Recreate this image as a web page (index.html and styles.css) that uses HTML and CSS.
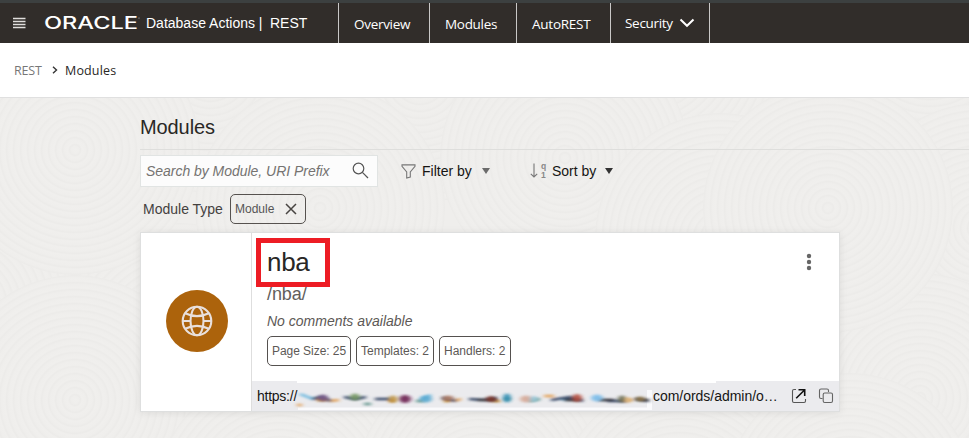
FILE: index.html
```html
<!DOCTYPE html>
<html lang="en">
<head>
<meta charset="utf-8">
<title>REST Modules</title>
<link rel="stylesheet" href="styles.css">
</head>
<body>
<header class="topbar">
  <div class="brand">
    <svg class="menu" width="13" height="12" viewBox="0 0 13 12"><path d="M0 1.5H12.5M0 4.5H12.5M0 7.5H12.5M0 10.5H12.5" stroke="#e0dedc" stroke-width="1.7"/></svg>
    <svg class="logo" width="95" height="20" viewBox="0 0 95 20"><text x="-1" y="16" textLength="94" lengthAdjust="spacingAndGlyphs">ORACLE</text><circle cx="94" cy="5" r=".6" fill="#bbb"/></svg>
    <span class="product">Database Actions |</span>
    <span class="service">REST</span>
  </div>
  <nav class="nav">
    <a class="tab overview">Overview</a>
    <a class="tab modules">Modules</a>
    <a class="tab autorest">AutoREST</a>
    <a class="tab security">Security<svg width="16" height="10" viewBox="0 0 16 10"><path d="M1.5 1.5L8 7.8L14.5 1.5" fill="none" stroke="#fff" stroke-width="2"/></svg></a>
  </nav>
</header>
<div class="crumbs"><span class="parent">REST</span><svg width="6" height="8" viewBox="0 0 6 8"><path d="M1 .8L4.5 4L1 7.2" fill="none" stroke="#333" stroke-width="1.4"/></svg><span class="current">Modules</span></div>
<main class="page">
  <svg class="texture" width="969" height="340" viewBox="0 0 969 340">
    <defs>
      <radialGradient id="rings" gradientUnits="userSpaceOnUse" cx="0" cy="0" r="7" spreadMethod="repeat">
        <stop offset="0" stop-color="#f0efed"/><stop offset=".5" stop-color="#efeeec"/><stop offset=".78" stop-color="#ecebe9"/><stop offset="1" stop-color="#f0efed"/>
      </radialGradient>
      <circle id="disc" r="125" fill="url(#rings)"/>
    </defs>
    <use href="#disc" x="210" y="-30"/><use href="#disc" x="420" y="-20"/><use href="#disc" x="650" y="-50"/><use href="#disc" x="930" y="-60"/>
    <use href="#disc" x="-40" y="210"/><use href="#disc" x="180" y="250"/><use href="#disc" x="75" y="302"/><use href="#disc" x="75" y="52"/>
    <use href="#disc" x="320" y="110"/><use href="#disc" x="565" y="60"/>
    <use href="#disc" x="720" y="140"/><use href="#disc" x="980" y="130"/><use href="#disc" x="920" y="300"/><use href="#disc" x="828" y="110"/>
    <use href="#disc" x="280" y="400"/><use href="#disc" x="480" y="390"/><use href="#disc" x="680" y="410"/><use href="#disc" x="850" y="400"/>
  </svg>
  <h1 class="title">Modules</h1>
  <div class="tools">
    <div class="search"><span>Search by Module, URI Prefix</span><svg width="17" height="17" viewBox="0 0 17 17" fill="none" stroke="#555" stroke-width="1.2"><circle cx="6.5" cy="6.5" r="5.3"/><path d="M10.4 10.4L16 16"/></svg></div>
    <div class="tool filter"><svg width="15" height="15" viewBox="0 0 15 15"><path d="M1 .9H14V2.4L9.3 8V13L5.7 14V8L1 2.4Z" fill="none" stroke="#777" stroke-width="1.1"/></svg><span>Filter by</span><i class="caret"></i></div>
    <div class="tool sort"><svg width="17" height="16" viewBox="0 0 17 16"><path d="M4 .5V14M.8 10.8L4 14L7.2 10.8" fill="none" stroke="#777" stroke-width="1.1"/><text x="11" y="6">q</text><text x="11" y="14.8">1</text></svg><span>Sort by</span><i class="caret dark"></i></div>
  </div>
  <div class="types"><span class="label">Module Type</span><span class="chip">Module<svg width="12" height="12" viewBox="0 0 12 12"><path d="M1 1L11 11M11 1L1 11" stroke="#484542" stroke-width="1.5"/></svg></span></div>
  <article class="card">
    <div class="badge"><div class="globe"><svg width="32" height="32" viewBox="0 0 32 32" fill="none" stroke="#e9e0dc" stroke-width="2.1"><circle cx="16" cy="16" r="14.3"/><ellipse cx="16" cy="16" rx="6.5" ry="14.3"/><path d="M4.2 8.2Q16 14 27.8 8.2M4.2 23.8Q16 18 27.8 23.8M1.7 16H9.5M22.5 16H30.3"/></svg></div></div>
    <div class="content">
      <div class="details">
        <h2 class="name">nba</h2>
        <div class="path">/nba/</div>
        <div class="comment">No comments available</div>
        <div class="facts"><span class="f1">Page Size: 25</span><span class="f2">Templates: 2</span><span class="f3">Handlers: 2</span></div>
        <svg class="more" width="6" height="18" viewBox="0 0 6 18" fill="#666"><circle cx="3" cy="3" r="2.2"/><circle cx="3" cy="9" r="2.2"/><circle cx="3" cy="15" r="2.2"/></svg>
        <div class="callout"></div>
      </div>
      <div class="link">
        <span class="scheme">https://</span>
        <svg class="redacted" width="355" height="30" viewBox="0 0 355 30">
          <defs><filter id="soft" x="-10%" y="-100%" width="120%" height="300%"><feGaussianBlur stdDeviation="2 .8"/></filter></defs>
          <path d="M0 0H419V2H0Z" fill="#fff"/><path d="M1 26.5H355V29H1ZM350 9H355V27H350Z" fill="#fafafc"/>
          <g fill="none" stroke-width="2.5" filter="url(#soft)">
            <path d="M3 13L16 18M124 18L134 14M264 18L274 19" stroke="#75bce0"/>
            <path d="M0 24H5M32 20L42 19M157 20L164 18M247 15H257" stroke="#e3a35c"/>
            <path d="M15 18L24 16L34 20M47 16L58 18L69 16M78 18H94M145 17L159 20M172 18L187 19L200 17M254 19L273 16L286 20M310 20L330 20M338 18L352 20" stroke="#384968"/>
            <path d="M20 19H29M92 20H98M147 20H153M196 20H203M326 19H335" stroke="#bd8328"/>
            <path d="M67 23H74M119 20H127M207 18H213M232 20L243 18" stroke="#65978e"/>
            <path d="M180 19H199M267 19H281M302 19H317M344 19H352" stroke="#333338"/>
          </g>
          <g filter="url(#soft)" opacity=".85"><ellipse cx="26" cy="17" rx="5" ry="3.5" fill="#765687"/><ellipse cx="58" cy="16" rx="5" ry="3.5" fill="#71945d"/><ellipse cx="96" cy="18" rx="4" ry="3.5" fill="#be903a"/><ellipse cx="108" cy="18" rx="6" ry="4" fill="#661749"/><ellipse cx="129" cy="18" rx="6" ry="3.5" fill="#55a7d0"/><ellipse cx="151" cy="17" rx="6" ry="2.5" fill="#ad7860"/><ellipse cx="194" cy="18" rx="5" ry="3" fill="#823528"/><ellipse cx="210" cy="17" rx="4" ry="4.5" fill="#2789b0"/><ellipse cx="229" cy="18" rx="6" ry="3.5" fill="#d4a592"/><ellipse cx="237" cy="18" rx="4" ry="3" fill="#98c7d9"/><ellipse cx="280" cy="17" rx="5" ry="4" fill="#b64c3a"/><ellipse cx="300" cy="17" rx="6" ry="3.5" fill="#73b9e9"/><ellipse cx="325" cy="18" rx="4" ry="3.5" fill="#686b4e"/><ellipse cx="331" cy="19" rx="3" ry="3" fill="#ebc38f"/><ellipse cx="343" cy="18" rx="5" ry="2.5" fill="#8b703d"/></g>
        </svg>
        <span class="host">com/ords/admin/o…</span>
        <svg class="open" width="16" height="16" viewBox="0 0 16 16" fill="none"><path d="M5 1.5H3Q1.5 1.5 1.5 3V13Q1.5 14.5 3 14.5H13Q14.5 14.5 14.5 13V11" stroke="#565656" stroke-width="1.1"/><path d="M5.2 10.3L13.3 2.2M7.5 1.8H13.7V8" stroke="#111" stroke-width="1.6"/></svg>
        <svg class="copy" width="16" height="16" viewBox="0 0 16 16" fill="none" stroke="#656565" stroke-width="1.1"><path d="M4.5 10.5H3Q1.5 10.5 1.5 9V2.5Q1.5 1 3 1H9Q10.5 1 10.5 2.5V4"/><rect x="5.2" y="5" width="9.3" height="9.5" rx="1.5"/></svg>
      </div>
    </div>
  </article>
</main>
</body>
</html>
```

FILE: styles.css
```css
* { box-sizing: border-box; }
body { margin: 0; width: 969px; height: 438px; overflow: hidden; background: #fff; font-family: "Liberation Sans", Arial, sans-serif; color: #292725; }
svg { display: block; flex-shrink: 0; }
.topbar { height: 43px; border-top: 3px solid #3c4040; background: #312d2a; display: flex; color: #fff; }
.brand { width: 338px; display: flex; align-items: center; padding: 0 0 0 13px; white-space: nowrap; }
.menu { margin-top: -1px; }
.logo { margin-left: 19px; overflow: visible; }
.logo text { font: 500 17px Inter, sans-serif; fill: #fff; }
.product { margin-left: 6px; font-size: 14px; width: 117px; }
.service { margin-left: 7px; font-size: 14px; }
.nav { display: flex; font: 13.5px "Open Sans", "Noto Sans", sans-serif; border-left: 1px solid #c9c8c7; }
.tab { display: flex; align-items: center; padding: 1px 0 0 15px; border-right: 1px solid #c9c8c7; white-space: nowrap; }
.overview { width: 91px; letter-spacing: -.3px; }
.modules { width: 87px; padding-left: 15px; letter-spacing: -.3px; }
.autorest { width: 94px; letter-spacing: -.25px; }
.security { width: 99px; padding: 0 0 1px 14px; letter-spacing: -.3px; }
.security svg { margin-left: 6px; }
.crumbs { height: 55px; border-bottom: 1px solid #e0e0e0; display: flex; align-items: center; padding-left: 14px; font: 12.5px "Open Sans", "Noto Sans", sans-serif; }
.parent { width: 28px; color: #777; letter-spacing: -.2px; }
.crumbs svg { margin: 0 7px 0 10px; }
.current { letter-spacing: .15px; }
.page { position: relative; height: 340px; background: #efeeec; padding-left: 140px; }
.texture { position: absolute; left: 0; top: 0; }
.title, .tools, .types, .card { position: relative; }
.title { margin: 0; height: 52px; padding-top: 17px; border-bottom: 1px solid #dededc; font-size: 20px; line-height: 24px; font-weight: 400; letter-spacing: -.1px; }
.tools { height: 44px; padding-top: 5px; display: flex; }
.search { width: 238px; height: 32px; border: 1px solid #e1e4e3; background: #fcfcfc; display: flex; padding: 6px 8px 0 5px; justify-content: space-between; font-size: 14px; line-height: 19px; font-style: italic; color: #757371; white-space: nowrap; }
.search span { letter-spacing: -.03px; }
.tool { display: flex; align-items: center; height: 32px; font-size: 14px; color: #161513; white-space: nowrap; }
.filter { margin-left: 23px; width: 129px; }
.filter span { margin-left: 6px; width: 51px; }
.sort svg { overflow: visible; }
.sort span { margin-left: 5px; width: 45px; }
.sort text { font: bold 8.5px "Liberation Sans", sans-serif; fill: #888; }
.caret { margin-left: 8px; border: 4.5px solid transparent; border-top: 6px solid #6b6b6b; border-bottom: 0; }
.filter .caret { margin-left: 9px; }
.dark { border-top-color: #333; }
.types { height: 38px; display: flex; align-items: flex-start; padding-left: 3px; font-size: 14px; }
.label { width: 87px; padding-top: 7px; white-space: nowrap; color: #44413f; }
.chip { width: 76px; height: 30px; border: 1px solid #56524f; border-radius: 5px; display: flex; align-items: center; padding: 0 8px 1px 4px; justify-content: space-between; font-size: 12px; color: #555; }
.card { width: 700px; height: 180px; border: 1px solid #dedfdf; background: #fff; display: flex; box-shadow: 0 1px 8px rgba(0,0,0,.08); }
.badge { width: 111px; border-right: 1px solid #dedede; display: flex; justify-content: center; align-items: center; padding: 0 0 2px 1px; }
.globe { width: 62px; height: 62px; border-radius: 50%; background: #ac630c; display: flex; align-items: center; justify-content: center; }
.content { width: 587px; }
.details { position: relative; height: 148px; padding: 13px 0 0 15px; }
.name { margin: 0; font-weight: 400; font-size: 26px; line-height: 33px; height: 37px; letter-spacing: -.3px; }
.path { font-size: 18px; line-height: 22px; height: 27px; color: #625e5b; letter-spacing: -.1px; }
.comment { font-size: 14px; line-height: 22px; height: 26px; font-style: italic; color: #5d5956; }
.facts { display: flex; gap: 5px; }
.facts span { height: 30px; border: 1px solid #55514f; border-radius: 5px; padding: 7px 0 0 4px; font-size: 12px; line-height: 14px; color: #5d5956; white-space: nowrap; }
.facts .f1 { width: 84px; letter-spacing: -.05px; }
.facts .f2 { width: 78px; }
.facts .f3 { width: 72px; }
.more { position: absolute; left: 554px; top: 20px; }
.callout { position: absolute; left: 4px; top: 5px; width: 74px; height: 49px; border: 5px solid #ed1c24; }
.link { height: 30px; background: #ebebee; display: flex; align-items: center; padding-left: 5px; font-size: 14px; color: #161513; }
.scheme { width: 40px; white-space: nowrap; letter-spacing: -.25px; }
.redacted { overflow: visible; }
.host { width: 125px; margin-left: 1px; white-space: nowrap; letter-spacing: -.03px; }
.open { margin-left: 13px; }
.copy { margin-left: 11px; }
```
